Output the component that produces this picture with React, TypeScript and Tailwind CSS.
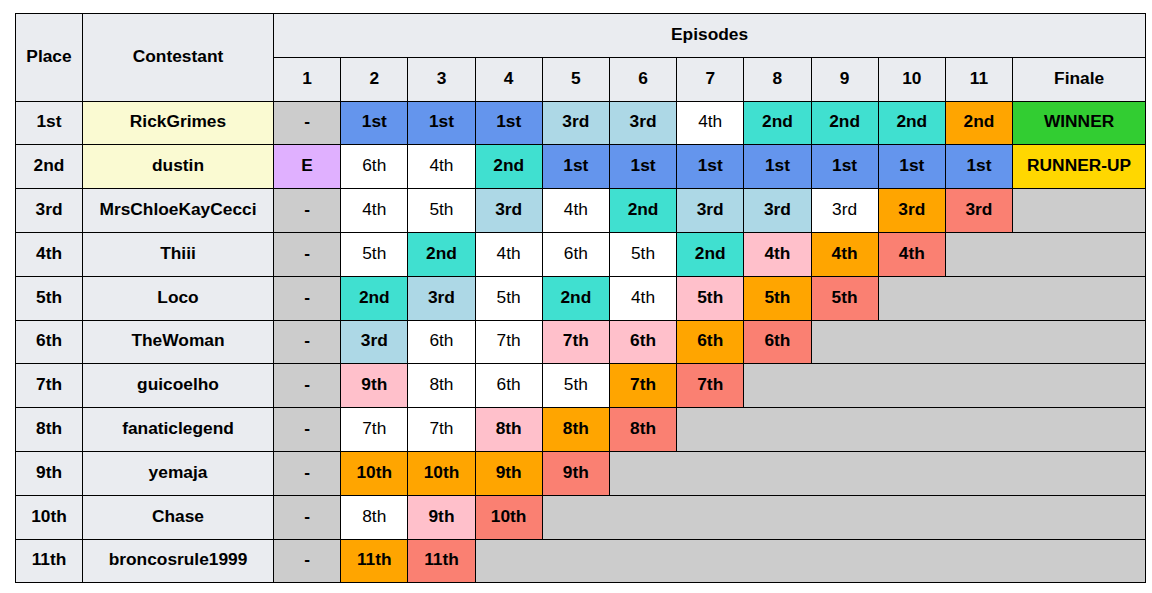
import React from "react";

const W = "#ffffff";
const CB = "#6495ED";
const LB = "#ADD8E6";
const TQ = "#40E0D0";
const OR = "#FFA500";
const SA = "#FA8072";
const PK = "#FFC0CB";
const GR = "#cccccc";

const bgClass: Record<string, string> = {
  [W]: "bg-white font-normal",
  [CB]: "bg-[#6495ED] font-bold",
  [LB]: "bg-[#ADD8E6] font-bold",
  [TQ]: "bg-[#40E0D0] font-bold",
  [OR]: "bg-[#FFA500] font-bold",
  [SA]: "bg-[#FA8072] font-bold",
  [PK]: "bg-[#FFC0CB] font-bold",
  [GR]: "bg-[#cccccc] font-bold",
  E: "bg-[#E0B0FF] font-bold",
  WIN: "bg-[#32CD32] font-bold",
  RU: "bg-[#FFD700] font-bold",
};

type Row = { place: string; name: string; hl?: boolean; cells: [string, string][]; gray: number };

const rows: Row[] = [
  {
    place: "1st",
    name: "RickGrimes",
    hl: true,
    cells: [
      ["-", GR], ["1st", CB], ["1st", CB], ["1st", CB], ["3rd", LB], ["3rd", LB], ["4th", W],
      ["2nd", TQ], ["2nd", TQ], ["2nd", TQ], ["2nd", OR], ["WINNER", "WIN"],
    ],
    gray: 0,
  },
  {
    place: "2nd",
    name: "dustin",
    hl: true,
    cells: [
      ["E", "E"], ["6th", W], ["4th", W], ["2nd", TQ], ["1st", CB], ["1st", CB], ["1st", CB],
      ["1st", CB], ["1st", CB], ["1st", CB], ["1st", CB], ["RUNNER-UP", "RU"],
    ],
    gray: 0,
  },
  {
    place: "3rd",
    name: "MrsChloeKayCecci",
    cells: [
      ["-", GR], ["4th", W], ["5th", W], ["3rd", LB], ["4th", W], ["2nd", TQ], ["3rd", LB],
      ["3rd", LB], ["3rd", W], ["3rd", OR], ["3rd", SA],
    ],
    gray: 1,
  },
  {
    place: "4th",
    name: "Thiii",
    cells: [
      ["-", GR], ["5th", W], ["2nd", TQ], ["4th", W], ["6th", W], ["5th", W], ["2nd", TQ],
      ["4th", PK], ["4th", OR], ["4th", SA],
    ],
    gray: 2,
  },
  {
    place: "5th",
    name: "Loco",
    cells: [
      ["-", GR], ["2nd", TQ], ["3rd", LB], ["5th", W], ["2nd", TQ], ["4th", W], ["5th", PK],
      ["5th", OR], ["5th", SA],
    ],
    gray: 3,
  },
  {
    place: "6th",
    name: "TheWoman",
    cells: [
      ["-", GR], ["3rd", LB], ["6th", W], ["7th", W], ["7th", PK], ["6th", PK], ["6th", OR], ["6th", SA],
    ],
    gray: 4,
  },
  {
    place: "7th",
    name: "guicoelho",
    cells: [["-", GR], ["9th", PK], ["8th", W], ["6th", W], ["5th", W], ["7th", OR], ["7th", SA]],
    gray: 5,
  },
  {
    place: "8th",
    name: "fanaticlegend",
    cells: [["-", GR], ["7th", W], ["7th", W], ["8th", PK], ["8th", OR], ["8th", SA]],
    gray: 6,
  },
  {
    place: "9th",
    name: "yemaja",
    cells: [["-", GR], ["10th", OR], ["10th", OR], ["9th", OR], ["9th", SA]],
    gray: 7,
  },
  {
    place: "10th",
    name: "Chase",
    cells: [["-", GR], ["8th", W], ["9th", PK], ["10th", SA]],
    gray: 8,
  },
  {
    place: "11th",
    name: "broncosrule1999",
    cells: [["-", GR], ["11th", OR], ["11th", SA]],
    gray: 9,
  },
];

const td = "border border-black text-center align-middle px-0 pt-0 pb-[3px]";

export default function App() {
  return (
    <div className="w-[1152px] h-[593px] bg-white pl-[15px] pt-[13px] font-['Liberation_Sans',Arial,sans-serif] text-[17.33px] leading-[20px] text-black">
      <table className="border-collapse table-fixed w-[1131px]">
        <colgroup>
          <col className="w-[67px]" />
          <col className="w-[191px]" />
          {Array.from({ length: 11 }).map((_, i) => (
            <col key={i} className="w-[67.2px]" />
          ))}
          <col className="w-[133px]" />
        </colgroup>
        <thead>
          <tr className="h-[43.8px]">
            <th rowSpan={2} className={`${td} bg-[#eaecf0] font-bold`}>Place</th>
            <th rowSpan={2} className={`${td} bg-[#eaecf0] font-bold`}>Contestant</th>
            <th colSpan={12} className={`${td} bg-[#eaecf0] font-bold`}>Episodes</th>
          </tr>
          <tr className="h-[43.8px]">
            {["1", "2", "3", "4", "5", "6", "7", "8", "9", "10", "11", "Finale"].map((h) => (
              <th key={h} className={`${td} bg-[#eaecf0] font-bold`}>{h}</th>
            ))}
          </tr>
        </thead>
        <tbody>
          {rows.map((r) => (
            <tr key={r.place} className="h-[43.8px]">
              <td className={`${td} bg-[#eaecf0] font-bold`}>{r.place}</td>
              <td className={`${td} font-bold ${r.hl ? "bg-[#FAFAD2]" : "bg-[#eaecf0]"}`}>{r.name}</td>
              {r.cells.map(([t, c], i) => (
                <td key={i} className={`${td} ${bgClass[c]}`}>{t}</td>
              ))}
              {r.gray > 0 && <td colSpan={r.gray} className={`${td} bg-[#cccccc]`}></td>}
            </tr>
          ))}
        </tbody>
      </table>
    </div>
  );
}
